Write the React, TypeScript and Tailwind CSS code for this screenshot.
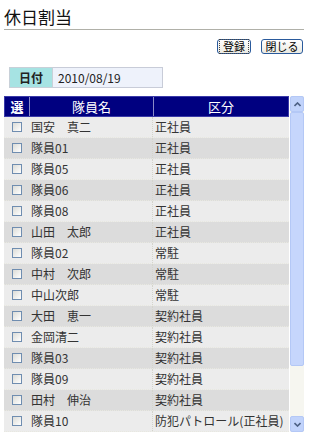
const ROWS: [string, string][] = [
  ['国安　真二', '正社員'],
  ['隊員01', '正社員'],
  ['隊員05', '正社員'],
  ['隊員06', '正社員'],
  ['隊員08', '正社員'],
  ['山田　太郎', '正社員'],
  ['隊員02', '常駐'],
  ['中村　次郎', '常駐'],
  ['中山次郎', '常駐'],
  ['大田　恵一', '契約社員'],
  ['金岡清二', '契約社員'],
  ['隊員03', '契約社員'],
  ['隊員09', '契約社員'],
  ['田村　伸治', '契約社員'],
  ['隊員10', '防犯パトロール(正社員)'],
];

function XpButton({ label, width, focused }: { label: string; width: string; focused?: boolean }) {
  return (
    <button
      type="button"
      className={`${width} h-[15px] flex items-center justify-center rounded-[3px] border border-[#2a5a9c] bg-gradient-to-b from-white to-[#ebeae2] text-[11px] leading-none text-black`}
    >
      <span className={focused ? 'outline outline-1 outline-dotted outline-[#444] px-[3px] py-[1px]' : 'px-[3px]'}>
        {label}
      </span>
    </button>
  );
}

function ScrollArrow({ up }: { up?: boolean }) {
  return (
    <div className="h-[16px] w-full flex items-center justify-center rounded-[2px] border border-[#b4c8f6] bg-[#c1d3fb]">
      <svg width="7" height="5" viewBox="0 0 7 5">
        <path
          d={up ? 'M0.5 4 L3.5 1 L6.5 4' : 'M0.5 1 L3.5 4 L6.5 1'}
          fill="none"
          stroke="#4d6185"
          strokeWidth="1.6"
        />
      </svg>
    </div>
  );
}

export default function App() {
  return (
    <div
      className="w-[320px] h-[444px] bg-white text-[#222]"
      style={{ fontFamily: '"Noto Sans CJK JP", "Noto Sans", sans-serif' }}
    >
      {/* Title */}
      <div className="pl-[4px] pr-[16px] pt-[6px]">
        <h1 className="text-[17px] leading-[22px] text-[#111] border-b border-[#b0b0a8] pb-[1px]">休日割当</h1>
      </div>

      {/* Buttons */}
      <div className="flex justify-end gap-[10px] pr-[17px] mt-[9px]">
        <XpButton label="登録" width="w-[34px]" focused />
        <XpButton label="閉じる" width="w-[42px]" />
      </div>

      {/* Date */}
      <div className="flex ml-[9px] mt-[13px] h-[21px]">
        <div className="w-[44px] flex items-center justify-center bg-[#a6e3e3] border border-[#c8d0d8] text-[12px] font-bold text-[#222]">
          日付
        </div>
        <div className="w-[110px] flex items-center pl-[5px] bg-[#eef2fb] border border-l-0 border-[#c8ccd8] text-[12px] text-[#222]">
          2010/08/19
        </div>
      </div>

      {/* Table */}
      <div className="flex ml-[4px] mt-[8px] w-[300px] h-[336px]">
        <div className="w-[285px] flex flex-col">
          <div className="flex h-[21px] bg-[#000080] border border-[#3a3aa8] text-white text-[13px] leading-none">
            <div className="w-[25px] flex items-center justify-center border-r border-[#8a8ac8] font-bold">選</div>
            <div className="w-[124px] flex items-center justify-center border-r border-[#8a8ac8]">隊員名</div>
            <div className="flex-1 flex items-center justify-center">区分</div>
          </div>
          {ROWS.map(([name, kind], i) => (
            <div
              key={i}
              className={`flex h-[21px] items-center text-[12px] text-[#333] border-b border-dotted border-[#e8e8e0] ${
                i % 2 === 0 ? 'bg-[#ececec]' : 'bg-[#dcdcdc]'
              }`}
            >
              <div className="w-[25px] flex items-center justify-center">
                <span className="w-[10px] h-[10px] border border-[#6f8db0] bg-gradient-to-br from-[#dcdcd7] to-white" />
              </div>
              <div className="w-[124px] pl-[2px] border-r border-dotted border-[#d4d4cc] h-full flex items-center whitespace-nowrap">
                {name}
              </div>
              <div className="flex-1 pl-[2px] whitespace-nowrap">{kind}</div>
            </div>
          ))}
        </div>
        <div className="w-[14px] ml-[1px] flex flex-col bg-[#f6f6f0]">
          <ScrollArrow up />
          <div className="h-[254px] rounded-[2px] border border-[#b4c8f6] bg-[#c6d6fc]" />
          <div className="flex-1" />
          <ScrollArrow />
        </div>
      </div>
    </div>
  );
}
